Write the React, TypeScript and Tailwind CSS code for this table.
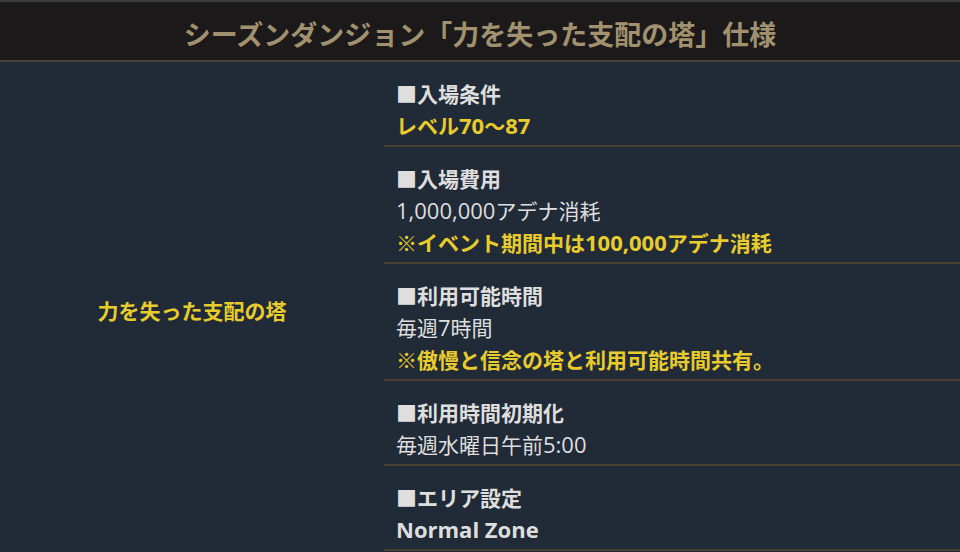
import React from "react";

const font = {
  fontFamily: '"Open Sans", "Noto Sans CJK JP", sans-serif',
};

const Y = "text-[#e8cb2c]";
const W = "text-[#dedede]";

function L({ children }: { children: React.ReactNode }) {
  return <span className="text-[22px] leading-none">{children}</span>;
}

function Row({ title, children }: { title: string; children: React.ReactNode }) {
  return (
    <div className="pl-[12px] pt-[16px] pb-[3px] border-b-2 border-[#4a3e30] text-[21px] leading-[32px]">
      <div className={`font-bold ${W}`}>■{title}</div>
      {children}
    </div>
  );
}

export default function App() {
  return (
    <div className="w-[960px] h-[552px] overflow-hidden bg-[#212b38]" style={font}>
      <div className="h-[62px] border-t-2 border-b-2 border-t-[#3a3e45] border-b-[#4d4134] bg-[#1b1919] flex justify-center pt-[18px]">
        <div className="text-[27px] leading-[30px] font-bold text-[#a1916f]">
          シーズンダンジョン「力を失った支配の塔」仕様
        </div>
      </div>
      <div className="flex">
        <div className="w-[384px] flex items-center justify-center pt-[10px]">
          <div className={`text-[21px] font-bold ${Y}`}>力を失った支配の塔</div>
        </div>
        <div className="flex-1">
          <Row title="入場条件">
            <div className={`font-bold ${Y}`}>
              レベル<L>70</L>～<L>87</L>
            </div>
          </Row>
          <Row title="入場費用">
            <div className={W}>
              <L>1,000,000</L>アデナ消耗
            </div>
            <div className={`font-bold ${Y}`}>
              ※イベント期間中は<L>100,000</L>アデナ消耗
            </div>
          </Row>
          <Row title="利用可能時間">
            <div className={W}>
              毎週<L>7</L>時間
            </div>
            <div className={`font-bold ${Y}`}>※傲慢と信念の塔と利用可能時間共有。</div>
          </Row>
          <Row title="利用時間初期化">
            <div className={W}>
              毎週水曜日午前<L>5:00</L>
            </div>
          </Row>
          <Row title="エリア設定">
            <div className={`font-bold ${W}`}>
              <L>Normal Zone</L>
            </div>
          </Row>
        </div>
      </div>
    </div>
  );
}
